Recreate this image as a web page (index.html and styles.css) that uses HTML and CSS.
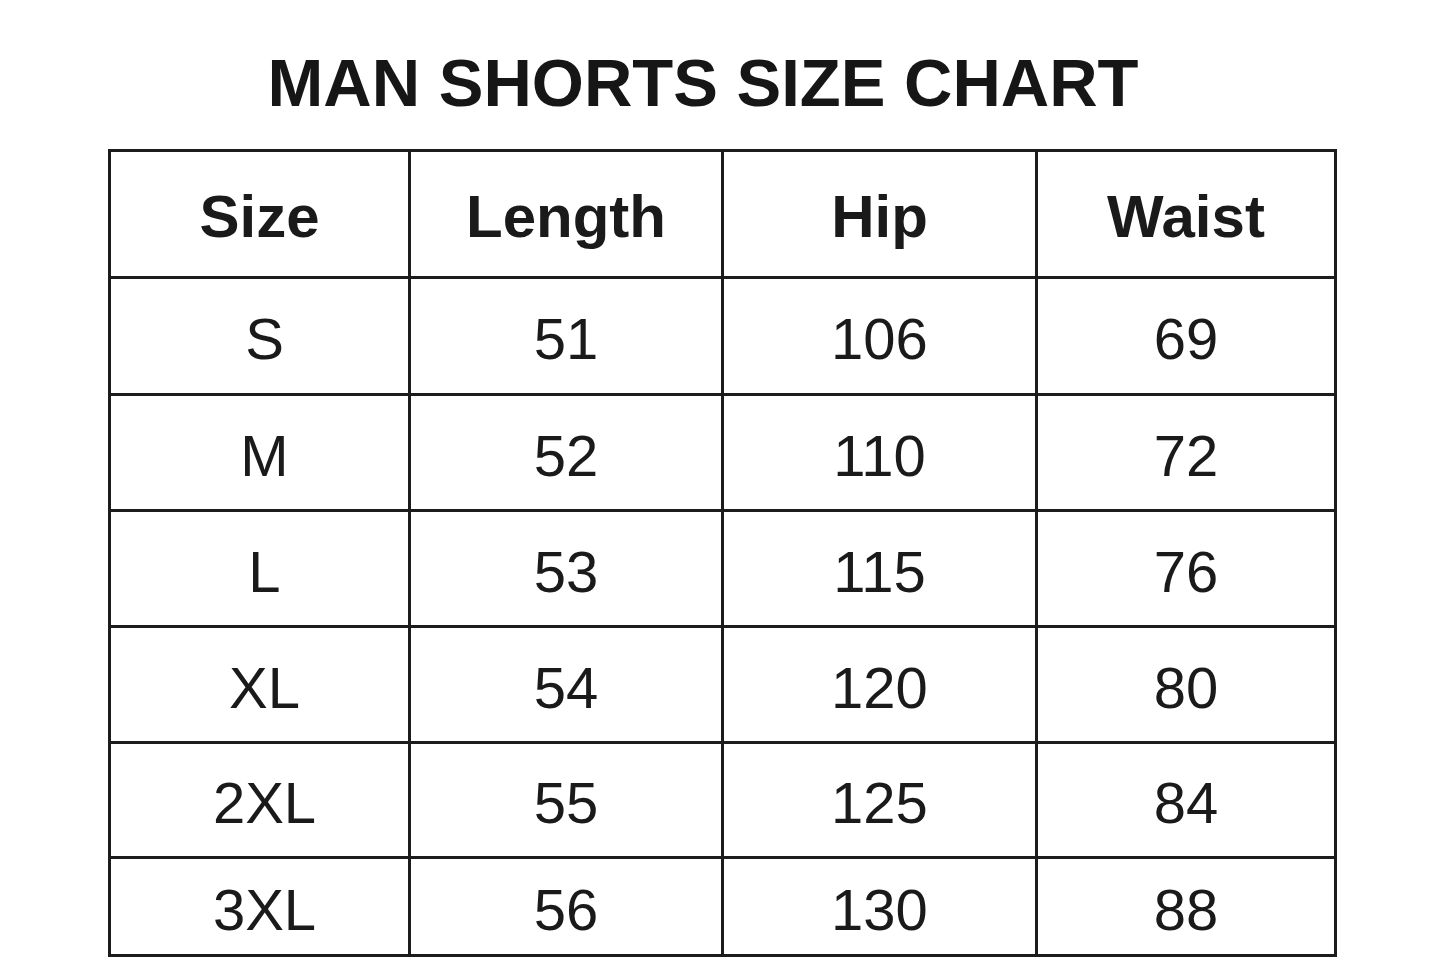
FILE: index.html
```html
<!DOCTYPE html>
<html lang="en">
<head>
<meta charset="utf-8">
<title>Man Shorts Size Chart</title>
<link rel="stylesheet" href="styles.css">
</head>
<body>
  <main class="page">
    <h1 class="title">MAN SHORTS SIZE CHART</h1>
    <div class="chart">
      <div class="cell head">Size</div>
      <div class="cell head">Length</div>
      <div class="cell head">Hip</div>
      <div class="cell head">Waist</div>

      <div class="cell size">S</div><div class="cell">51</div><div class="cell">106</div><div class="cell">69</div>
      <div class="cell size">M</div><div class="cell">52</div><div class="cell">110</div><div class="cell">72</div>
      <div class="cell size">L</div><div class="cell">53</div><div class="cell">115</div><div class="cell">76</div>
      <div class="cell size">XL</div><div class="cell">54</div><div class="cell">120</div><div class="cell">80</div>
      <div class="cell size">2XL</div><div class="cell">55</div><div class="cell">125</div><div class="cell">84</div>
      <div class="cell size">3XL</div><div class="cell">56</div><div class="cell">130</div><div class="cell">88</div>
    </div>
  </main>
</body>
</html>
```

FILE: styles.css
```css
* {
  box-sizing: border-box;
}

html, body {
  margin: 0;
  padding: 0;
  background: #ffffff;
}

body {
  font-family: "Liberation Sans", Arial, sans-serif;
  color: #1a1a1a;
  width: 1445px;
  height: 963px;
  overflow: hidden;
}

.page {
  display: flex;
  flex-direction: column;
  align-items: flex-start;
  padding-top: 49px;
}

.title {
  margin: 0;
  width: 100%;
  padding-right: 39px;
  text-align: center;
  font-size: 67px;
  line-height: 67px;
  font-weight: 700;
  color: #161616;
}

.chart {
  margin: 33px 0 0 108px;
  display: grid;
  grid-template-columns: 300px 313px 314px 299px;
  grid-template-rows: 127px 117px 116px 116px 116px 115px 98px;
  border-left: 3px solid #1c1c1c;
  border-top: 3px solid #1c1c1c;
}

.cell {
  display: flex;
  align-items: center;
  justify-content: center;
  border-right: 3px solid #1c1c1c;
  border-bottom: 3px solid #1c1c1c;
  font-size: 58px;
  line-height: 1;
  font-weight: 400;
  padding-top: 6px;
}

.cell.size {
  padding-left: 10px;
}

.cell.head {
  font-weight: 700;
  font-size: 60px;
  padding-top: 5px;
}
```
